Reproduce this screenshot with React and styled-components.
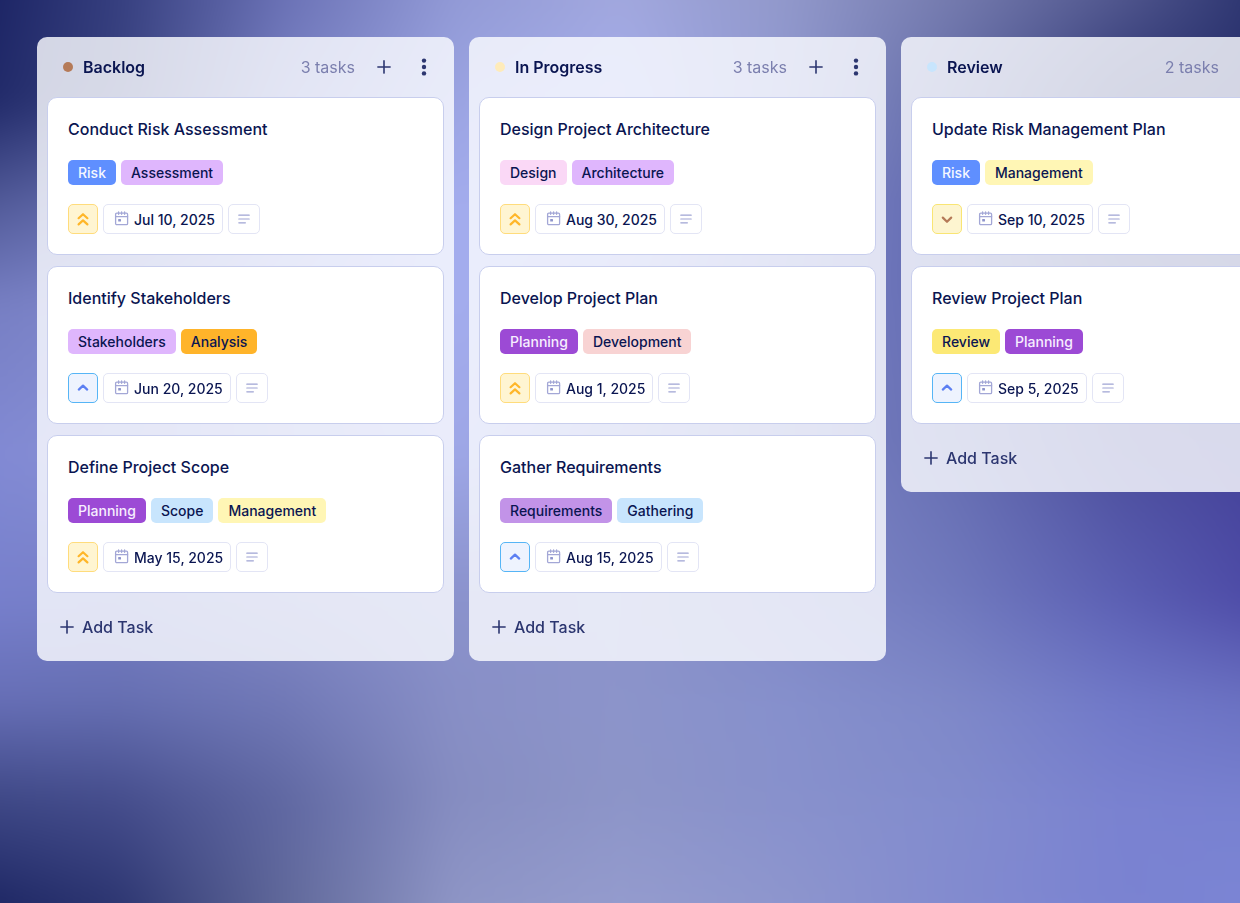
import React from "react";
import styled, { createGlobalStyle, css } from "styled-components";

const GlobalStyle = createGlobalStyle`
  *, *::before, *::after { box-sizing: border-box; }
  body {
    margin: 0;
    font-family: "Inter", "Liberation Sans", sans-serif;
    color: #0a1551;
    background: #7c84c4;
  }
`;

/* Mesh gradient: each band is a horizontal gradient that fades into the band below it. */
const Backdrop = styled.div`
  position: fixed;
  inset: -48px;
  z-index: -1;
  filter: blur(16px);
`;

const Band = styled.div`
  position: absolute;
  inset: 0;
  background: linear-gradient(to right, ${(p) => p.$colors});
  mask-image: ${(p) => (p.$to ? `linear-gradient(to bottom, #000 ${p.$from}%, transparent ${p.$to}%)` : "none")};
`;

const bands = [
  { at: 4, colors: "#141c5c, #363f7f, #6a71b5, #9199d5, #a1a7dd, #9198ca, #757bae, #52588f, #242d69" },
  { at: 15, colors: "#1a2363, #39427f, #7a82c4, #9ba4e2, #a6aeec, #8f97d0, #636ba6, #2f3674, #242b68" },
  { at: 25, colors: "#4a5390, #666eb0, #8a92d8, #a4adee, #a0a8e8, #8088cc, #6068ac, #383f80, #2a3070" },
  { at: 35, colors: "#737bbf, #8088cc, #98a0e0, #a4adee, #98a0e2, #7c84c8, #626ab0, #434a90, #343a80" },
  { at: 50, colors: "#8088d4, #8890d4, #959dd8, #9fa8e8, #9098d4, #7c84c4, #666eb2, #4c4e9c, #423e98" },
  { at: 65, colors: "#7780cf, #767ec4, #8289c6, #8a92cc, #8c94ca, #8088c6, #717abe, #5c60b4, #4a46a4" },
  { at: 75, colors: "#676fb8, #666fb2, #7179b7, #888fc6, #8c94ca, #8690cc, #7e88c8, #7078c8, #696fc0" },
  { at: 85, colors: "#3c4684, #454d8c, #6068a2, #868dc1, #8d95c8, #8891cc, #828ccd, #7a82d0, #7780d0" },
  { at: 96, colors: "#18215f, #2c3570, #61699a, #8f96c6, #959cce, #8e96ce, #838bd0, #7b83d2, #7c86d6" },
];

const Board = styled.main`
  display: flex;
  align-items: flex-start;
  gap: 15px;
  padding: 37px;
  overflow-x: auto;
  scrollbar-width: none;
`;

const Column = styled.section`
  flex: 0 0 417px;
  padding: 0 10px 10px;
  border-radius: 10px;
  background: rgba(250, 251, 255, 0.82);
`;

const ColumnHeader = styled.header`
  display: flex;
  align-items: center;
  height: 60px;
  padding: 0 8px 0 16px;
`;

const Dot = styled.span`
  width: 10px;
  height: 10px;
  margin-right: 10px;
  border-radius: 50%;
  background: ${(p) => p.$color};
`;

const ColumnTitle = styled.h2`
  flex: 1;
  margin: 0;
  font-size: 16px;
  font-weight: 600;
  line-height: 24px;
`;

const Count = styled.span`
  margin-right: 17px;
  font-size: 16px;
  line-height: 24px;
  color: #7b7fae;
`;

const IconButton = styled.button`
  display: flex;
  align-items: center;
  justify-content: center;
  width: 24px;
  height: 24px;
  padding: 0;
  border: 0;
  background: none;
  color: #2c3670;
  & + & { margin-left: 16px; }
`;

const CardList = styled.ul`
  display: flex;
  flex-direction: column;
  gap: 11px;
  margin: 0;
  padding: 0;
  list-style: none;
`;

const Card = styled.li`
  padding: 19px 20px 20px;
  border: 1px solid #c8ceed;
  border-radius: 10px;
  background: #fff;
`;

const CardTitle = styled.h3`
  margin: 0 0 19px;
  font-size: 16px;
  font-weight: 500;
  line-height: 24px;
`;

const Row = styled.div`
  display: flex;
  align-items: center;
  gap: 5px;
`;

const TagRow = styled(Row)`
  margin-bottom: 19px;
`;

const Tag = styled.span`
  padding: 0 10px;
  border-radius: 5px;
  font-size: 14px;
  font-weight: 500;
  line-height: 25px;
  color: ${(p) => p.$color};
  background: ${(p) => p.$bg};
`;

const chip = css`
  display: flex;
  align-items: center;
  justify-content: center;
  height: 30px;
  border: 1px solid #e3e5f5;
  border-radius: 5px;
  background: #fff;
`;

const Priority = styled.span`
  ${chip}
  width: 30px;
  color: ${(p) => p.$tone.icon};
  border-color: ${(p) => p.$tone.border};
  background: ${(p) => p.$tone.bg};
`;

const DateChip = styled.span`
  ${chip}
  gap: 5px;
  padding: 0 7px 0 10px;
  font-size: 14px;
  font-weight: 500;
`;

const NoteChip = styled.span`
  ${chip}
  width: 32px;
`;

const AddTask = styled.button`
  display: flex;
  align-items: center;
  gap: 8px;
  height: 48px;
  margin-top: 10px;
  padding: 0 13px;
  border: 0;
  background: none;
  font: inherit;
  font-size: 16px;
  font-weight: 500;
  color: #2c3670;
`;

const PlusIcon = () => (
  <svg width="14" height="14" viewBox="0 0 14 14" fill="none" stroke="currentColor" strokeWidth="1.6" strokeLinecap="round" aria-hidden="true">
    <path d="M7 .9v12.2M.9 7h12.2" />
  </svg>
);

const DotsIcon = () => (
  <svg width="6" height="18" viewBox="0 0 6 18" fill="currentColor" aria-hidden="true">
    <circle cx="3" cy="2.6" r="2.2" />
    <circle cx="3" cy="9" r="2.2" />
    <circle cx="3" cy="15.4" r="2.2" />
  </svg>
);

const CalendarIcon = () => (
  <svg width="15" height="16" viewBox="0 0 15 16" fill="none" stroke="#a3a7d6" strokeWidth="1.3" strokeLinecap="round" aria-hidden="true">
    <rect x="1.6" y="2.2" width="12" height="11.4" rx="1.2" />
    <path d="M1.6 5.7h12M4.6 .9v2.4M10.6 .9v2.4M7.6 .9v2.4" />
    <rect x="4.2" y="8" width="2.8" height="2.6" rx=".5" fill="#8f95cc" stroke="none" />
  </svg>
);

const NoteIcon = () => (
  <svg width="12" height="10" viewBox="0 0 12 10" fill="none" stroke="#9fa4d3" strokeWidth="1.2" strokeLinecap="round" aria-hidden="true">
    <path d="M.8 1.2h10.4M.8 5h10.4M.8 8.8h6.6" />
  </svg>
);

const chevrons = {
  highest: "M1.6 6.2 6 2.2l4.4 4M1.6 12.4 6 8.4l4.4 4",
  high: "M1.8 8.6 6 4.6l4.2 4",
  low: "M1.8 5.6 6 9.8l4.2-4.2",
};

const PriorityIcon = ({ level }) => (
  <svg width="12" height="14" viewBox="0 0 12 14" fill="none" stroke="currentColor" strokeWidth="2.2" strokeLinecap="round" strokeLinejoin="round" aria-hidden="true">
    <path d={chevrons[level]} />
  </svg>
);

const tones = {
  highest: { icon: "#ffb629", border: "#ffdc7c", bg: "#fff5d2" },
  high: { icon: "#5c7ff2", border: "#56b5f6", bg: "#eef3fe" },
  low: { icon: "#b57a58", border: "#f9e574", bg: "#fdf5d0" },
};

const tagColors = {
  Risk: ["#5f8fff", "#f4f7ff"],
  Planning: ["#9c4ad5", "#f7eeff"],
  Assessment: ["#dfb6fd"],
  Stakeholders: ["#dfb6fd"],
  Architecture: ["#dfb6fd"],
  Analysis: ["#ffb42a"],
  Scope: ["#c8e5fd"],
  Gathering: ["#c8e5fd"],
  Management: ["#fff6b5"],
  Design: ["#fad8f6"],
  Development: ["#f8d3d3"],
  Requirements: ["#c293e8"],
  Review: ["#fce975"],
};

const columns = [
  {
    title: "Backlog",
    dot: "#b57a58",
    tasks: [
      { title: "Conduct Risk Assessment", tags: ["Risk", "Assessment"], level: "highest", date: "Jul 10, 2025" },
      { title: "Identify Stakeholders", tags: ["Stakeholders", "Analysis"], level: "high", date: "Jun 20, 2025" },
      { title: "Define Project Scope", tags: ["Planning", "Scope", "Management"], level: "highest", date: "May 15, 2025" },
    ],
  },
  {
    title: "In Progress",
    dot: "#feebba",
    tasks: [
      { title: "Design Project Architecture", tags: ["Design", "Architecture"], level: "highest", date: "Aug 30, 2025" },
      { title: "Develop Project Plan", tags: ["Planning", "Development"], level: "highest", date: "Aug 1, 2025" },
      { title: "Gather Requirements", tags: ["Requirements", "Gathering"], level: "high", date: "Aug 15, 2025" },
    ],
  },
  {
    title: "Review",
    dot: "#c8e5fd",
    tasks: [
      { title: "Update Risk Management Plan", tags: ["Risk", "Management"], level: "low", date: "Sep 10, 2025" },
      { title: "Review Project Plan", tags: ["Review", "Planning"], level: "high", date: "Sep 5, 2025" },
    ],
  },
];

const TaskCard = ({ task }) => (
  <Card>
    <CardTitle>{task.title}</CardTitle>
    <TagRow>
      {task.tags.map((tag) => {
        const [bg, color = "#0a1551"] = tagColors[tag];
        return <Tag key={tag} $bg={bg} $color={color}>{tag}</Tag>;
      })}
    </TagRow>
    <Row>
      <Priority $tone={tones[task.level]}><PriorityIcon level={task.level} /></Priority>
      <DateChip><CalendarIcon />{task.date}</DateChip>
      <NoteChip><NoteIcon /></NoteChip>
    </Row>
  </Card>
);

export default function App() {
  return (
    <>
      <GlobalStyle />
      <Backdrop aria-hidden="true">
        {bands
          .map((band, i) => (
            <Band key={band.at} $colors={band.colors} $from={band.at} $to={bands[i + 1]?.at} />
          ))
          .reverse()}
      </Backdrop>
      <Board>
        {columns.map((column) => (
          <Column key={column.title}>
            <ColumnHeader>
              <Dot $color={column.dot} />
              <ColumnTitle>{column.title}</ColumnTitle>
              <Count>{column.tasks.length} tasks</Count>
              <IconButton type="button" aria-label="Add task"><PlusIcon /></IconButton>
              <IconButton type="button" aria-label="Column menu"><DotsIcon /></IconButton>
            </ColumnHeader>
            <CardList>
              {column.tasks.map((task) => <TaskCard key={task.title} task={task} />)}
            </CardList>
            <AddTask type="button"><PlusIcon />Add Task</AddTask>
          </Column>
        ))}
      </Board>
    </>
  );
}
